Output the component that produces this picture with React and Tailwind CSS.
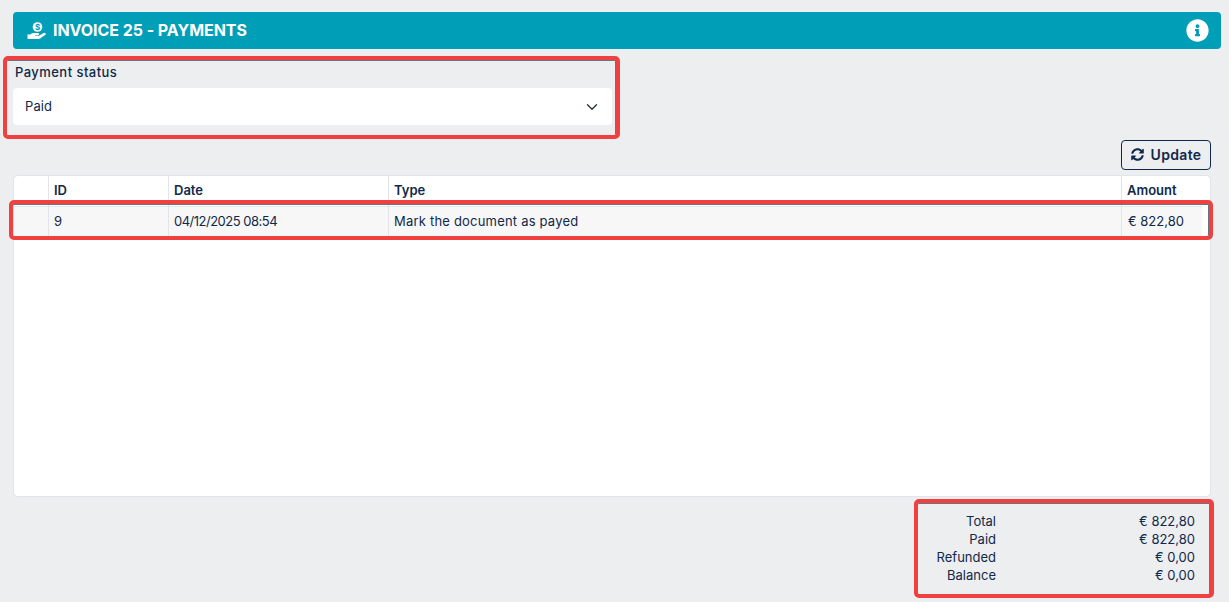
import React from "react";
import { ChevronDown } from "lucide-react";
import { FaInfoCircle, FaSyncAlt } from "react-icons/fa";

function HandCoin() {
  return (
    <svg width="20" height="18" viewBox="0 0 20 18" className="shrink-0">
      <circle cx="10.5" cy="5" r="4.8" fill="#fff" />
      <text x="10.5" y="8" textAnchor="middle" fontSize="8" fontWeight="700" fill="#009eb7" fontFamily="Inter, sans-serif">$</text>
      <path d="M0.5 12.5h2.8c1-1 2.2-1.5 3.6-1.5h3.6c1 0 1.6.5 1.6 1.2s-.6 1.2-1.6 1.2H8v.6h3.6l5-2.9c.8-.4 1.6-.3 2 .3.4.6.2 1.2-.5 1.7l-5 3.3c-.6.4-1.2.6-2 .6H0.5z" fill="#fff" />
    </svg>
  );
}

function RedBox({ className }) {
  return (
    <div className={`absolute pointer-events-none rounded-[5px] border-[4px] border-[#f04040] shadow-[inset_0_1px_0_#6b7280,inset_-1px_0_0_#6b7280] ${className}`} />
  );
}

function SummaryRow({ label, value }) {
  return (
    <div className="flex h-[18px] items-center">
      <div className="w-[82px] text-right">{label}</div>
      <div className="w-[199px] text-right">{value}</div>
    </div>
  );
}

export default function App() {
  return (
    <div
      className="h-[602px] overflow-hidden bg-[#edeef0] pt-3 text-[13px] text-[#10294a]"
      style={{ fontFamily: "Inter, 'Open Sans', sans-serif" }}
    >
      <div className="mr-[8px] ml-[13px] flex h-[37px] items-center justify-between rounded-[4px] bg-[#009eb7] pl-[14px] pr-[12px] text-white">
        <div className="flex items-center gap-[6px]">
          <HandCoin />
          <span className="pb-[2px] text-[16px] font-bold tracking-[-0.05px]">INVOICE 25 - PAYMENTS</span>
        </div>
        <span className="flex h-[24px] w-[24px] items-center justify-center">
          <FaInfoCircle size={23} color="#fff" />
        </span>
      </div>

      <div className="relative ml-[13px] mt-[13px] h-[63px] w-[599px]">
        <RedBox className="left-[-10px] top-[-6px] h-[83px] w-[617px]" />
        <div className="ml-[2px] pt-[1px] text-[13px] font-medium leading-[18px] tracking-[0.45px]">Payment status</div>
        <div className="mt-[7px] flex h-[37px] items-center justify-between rounded-[4px] bg-white pl-[12px] pr-[11px]">
          <span className="text-[13px] tracking-[0.1px]">Paid</span>
          <ChevronDown size={18} strokeWidth={1.6} color="#1f2937" />
        </div>
      </div>

      <div className="mr-[18px] mt-[15px] flex justify-end">
        <button className="flex h-[30px] w-[90px] items-center justify-center gap-[7px] rounded-[4px] border border-[#10294a] pb-[1px] text-[14px] font-semibold tracking-[0.35px]">
          <FaSyncAlt size={13} />
          Update
        </button>
      </div>

      <div className="ml-[13px] mr-[18px] mt-[5px] h-[322px] rounded-[5px] border border-[#e1e4e8] bg-white">
        <div className="grid h-[30px] grid-cols-[34px_120px_220px_1fr_89px] items-stretch font-semibold">
          <div />
          <div className="flex items-center border-l border-[#e1e4e8] pl-[5px]">ID</div>
          <div className="flex items-center border-l border-[#e1e4e8] pl-[5px]">Date</div>
          <div className="flex items-center border-l border-[#e1e4e8] pl-[5px]">Type</div>
          <div className="flex items-center border-l border-[#e1e4e8] pl-[5px]">Amount</div>
        </div>
        <div className="relative mr-[8px]">
          <RedBox className="left-[-5px] right-[-11px] top-[-6px] h-[40px]" />
          <div className="grid h-[31px] grid-cols-[34px_120px_220px_1fr_81px] items-stretch border-y border-[#e1e4e8] bg-[#f7f7f8]">
            <div />
            <div className="flex items-center border-l border-[#e1e4e8] pl-[5px]">9</div>
            <div className="flex items-center border-l border-[#e1e4e8] pl-[5px] tracking-[-0.5px]">04/12/2025 08:54</div>
            <div className="flex items-center border-l border-[#e1e4e8] pl-[5px] tracking-[0.2px]">Mark the document as payed</div>
            <div className="flex items-center border-l border-[#e1e4e8] pl-[6px]">€ 822,80</div>
          </div>
        </div>
      </div>

      <div className="relative ml-auto mr-[15px] mt-[16px] h-[72px] w-[300px]">
        <RedBox className="left-0 top-[-14px] h-[99px] w-[300px]" />
        <SummaryRow label="Total" value="€ 822,80" />
        <SummaryRow label="Paid" value="€ 822,80" />
        <SummaryRow label="Refunded" value="€ 0,00" />
        <SummaryRow label="Balance" value="€ 0,00" />
      </div>
    </div>
  );
}
